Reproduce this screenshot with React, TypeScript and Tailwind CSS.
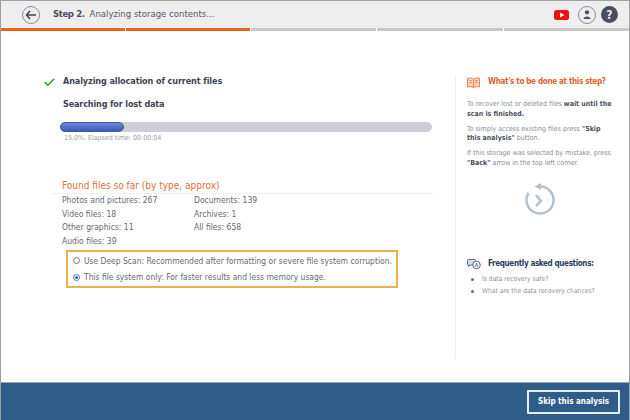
import { Check } from "lucide-react";

const filesLeft = ["Photos and pictures: 267", "Video files: 18", "Other graphics: 11", "Audio files: 39"];
const filesRight = ["Documents: 139", "Archives: 1", "All files: 658"];

const App = () => {
  return (
    <div className="w-[630px] h-[420px] flex flex-col overflow-hidden bg-white border-l border-r border-t border-[#a0a0a0] font-['DejaVu_Sans',sans-serif] [font-stretch:condensed]">
      <div className="h-[27px] shrink-0 bg-[#eeeeee] flex items-center pl-[21px] pr-[11px]">
        <div className="w-[18px] h-[18px] rounded-full border border-[#8a8d96] flex items-center justify-center">
          <svg width="12" height="10" viewBox="0 0 12 10" fill="none" stroke="#3f4454" strokeWidth="1.5">
            <path d="M5 1 L1.5 5 L5 9 M1.5 5 H11" />
          </svg>
        </div>
        <div className="ml-[13px] text-[9.5px] text-[#555a68] whitespace-nowrap">
          <span className="font-bold text-[#4a4f5e] tracking-[-0.4px]">Step 2.</span>
          <span className="ml-[5px]">Analyzing storage contents...</span>
        </div>
        <div className="ml-auto flex items-center">
          <svg width="15" height="10" viewBox="0 0 15 10" className="shrink-0">
            <rect width="15" height="10" rx="2.5" fill="#f40f0f" />
            <path d="M6 2.5 L10.5 5 L6 7.5 Z" fill="#fff" />
          </svg>
          <div className="ml-[9px] w-[18px] h-[18px] rounded-full border border-[#8a8d96] flex items-center justify-center">
            <svg width="8" height="9" viewBox="0 0 8 9" fill="#4a4e62">
              <circle cx="4" cy="2.3" r="2.1" />
              <path d="M0.5 9 C0.5 5.5 7.5 5.5 7.5 9 Z" />
            </svg>
          </div>
          <div className="ml-[5px] w-[17px] h-[17px] rounded-full bg-[#4a4e62] flex items-center justify-center text-[#eeeeee] text-[12px] font-bold">
            ?
          </div>
        </div>
      </div>
      <div className="h-[3px] shrink-0 flex gap-[1px]">
        <div className="w-[124px] bg-[#e8641b]" />
        <div className="w-[124px] bg-[#e8641b]" />
        <div className="flex-1 bg-[#c9c9c6]" />
        <div className="flex-1 bg-[#c9c9c6]" />
        <div className="flex-1 bg-[#c9c9c6]" />
      </div>

      <div className="flex-1 flex min-h-0">
        <div className="w-[454px] shrink-0 flex flex-col pt-[43px] pl-[42px]">
          <div className="flex items-center h-[16px] whitespace-nowrap">
            <Check size={13} strokeWidth={3} className="text-[#25a925] shrink-0" />
            <span className="ml-[7px] text-[9px] tracking-[-0.1px] font-bold text-[#3f4454]">Analyzing allocation of current files</span>
          </div>
          <div className="ml-[20px] mt-[8px] h-[16px] text-[9px] tracking-[-0.15px] font-bold text-[#3f4454]">Searching for lost data</div>
          <div className="ml-[17px] mt-[8px] w-[372px] h-[10px] rounded-full bg-[#cdcfd6]">
            <div className="w-[64px] h-full rounded-full border border-[#4058a8] bg-gradient-to-b from-[#6c86d8] to-[#3f5ab4]" />
          </div>
          <div className="ml-[21px] mt-[1px] text-[7px] text-[#9a9ea8]">15.0%. Elapsed time: 00:00:04</div>

          <div className="ml-[19px] mt-[36.5px] text-[10px] leading-[12px] text-[#e2703a] whitespace-nowrap">Found files so far (by type, approx)</div>
          <div className="ml-[9px] mt-[1px] w-[381px] border-t border-[#f0f0f0]" />
          <div className="ml-[19px] flex text-[8.5px] text-[#666a74] leading-[13.7px]">
            <div className="w-[132px] flex flex-col">
              {filesLeft.map((f) => (
                <div key={f}>{f}</div>
              ))}
            </div>
            <div className="flex flex-col">
              {filesRight.map((f) => (
                <div key={f}>{f}</div>
              ))}
            </div>
          </div>
          <div className="ml-[23px] mt-[1.5px] w-[332px] h-[38px] border-2 border-[#eeb04d] flex flex-col justify-center gap-[4px] pl-[5px] text-[8.45px] text-[#666a74] whitespace-nowrap">
            <div className="flex items-center gap-[4px]">
              <span className="w-[7px] h-[7px] rounded-full border border-[#777] shrink-0" />
              Use Deep Scan: Recommended after formatting or severe file system corruption.
            </div>
            <div className="flex items-center gap-[4px]">
              <span className="w-[7px] h-[7px] rounded-full border border-[#4a78c8] flex items-center justify-center shrink-0">
                <span className="w-[3px] h-[3px] rounded-full bg-[#2f5fc0]" />
              </span>
              This file system only: For faster results and less memory usage.
            </div>
          </div>
        </div>

        <div className="flex flex-col w-[174px] mt-[44px] mb-[23px] border-l border-[#f0f0f0] pl-[11px] pr-[16px]">
          <div className="flex items-center h-[14px] whitespace-nowrap">
            <svg width="13" height="11" viewBox="0 0 13 11" fill="#f8d3bd" stroke="#e8854f" strokeWidth="1" className="shrink-0">
              <path d="M6.5 2 C5 0.8 2.5 0.8 0.5 1.2 V10 C2.5 9.6 5 9.6 6.5 10.5 C8 9.6 10.5 9.6 12.5 10 V1.2 C10.5 0.8 8 0.8 6.5 2 Z" />
              <path d="M6.5 2 V10.5 M2.5 3.5 H4.8 M2.5 5.5 H4.8 M8.2 3.5 H10.5 M8.2 5.5 H10.5" fill="none" />
            </svg>
            <span className="ml-[8px] text-[8px] tracking-[-0.3px] font-bold text-[#e0622c]">What's to be done at this step?</span>
          </div>
          <div className="mt-[11px] text-[7px] leading-[9.5px] text-[#8a8f9b]">
            To recover lost or deleted files <b className="text-[#4a4f5e]">wait until the scan is finished.</b>
          </div>
          <div className="mt-[5.5px] text-[7px] leading-[9.5px] text-[#8a8f9b]">
            To simply access existing files press <b className="text-[#4a4f5e]">"Skip this analysis"</b> button.
          </div>
          <div className="mt-[5.5px] text-[7px] leading-[9.5px] text-[#8a8f9b]">
            If this storage was selected by mistake, press <b className="text-[#4a4f5e]">"Back"</b> arrow in the top left corner.
          </div>
          <div className="mt-[15px] self-center">
            <svg width="32" height="34" viewBox="0 0 32 34" fill="none" stroke="#b4c1cc" strokeWidth="2.5">
              <path d="M16 3.5 A13.5 13.5 0 1 1 4.5 10" />
              <path d="M10.5 3.5 L17 0 V7 Z" fill="#b4c1cc" stroke="none" />
              <path d="M12 12 L17 18 L12 23" />
            </svg>
          </div>
          <div className="mt-[40px] flex items-center h-[14px] whitespace-nowrap">
            <svg width="14" height="11" viewBox="0 0 14 11" fill="none" stroke="#5a6a86" strokeWidth="1" className="shrink-0">
              <path d="M1.5 0.5 H7.5 Q8.5 0.5 8.5 1.5 V5 Q8.5 6 7.5 6 H3 L1.5 7.5 V6 Q0.5 6 0.5 5 V1.5 Q0.5 0.5 1.5 0.5 Z" fill="#d6deea" />
              <circle cx="9.5" cy="6" r="3.8" fill="#fff" />
              <path d="M8 8 L9.5 4 L11 8 M8.6 6.8 H10.4" strokeWidth="0.7" />
            </svg>
            <span className="ml-[7px] text-[8px] tracking-[-0.35px] font-bold text-[#2c3e5c]">Frequently asked questions:</span>
          </div>
          <ul className="mt-[3px] flex flex-col gap-[2px] text-[6.7px] leading-[10px] text-[#8a8f9b] whitespace-nowrap">
            {["Is data recovery safe?", "What are the data recovery chances?"].map((q) => (
              <li key={q} className="flex items-center">
                <span className="ml-[4px] w-[3px] h-[3px] rounded-full bg-[#5a6f9a] shrink-0" />
                <span className="ml-[8px]">{q}</span>
              </li>
            ))}
          </ul>
        </div>
      </div>

      <div className="h-[38px] shrink-0 bg-[#2f5d8a] border-t border-[#9aa5b0] flex items-center justify-end pr-[10px] -mx-[1px]">
        <button className="w-[93px] h-[24px] border-2 border-[#e6edf3] rounded-[1px] text-white text-[8px] font-bold whitespace-nowrap">
          Skip this analysis
        </button>
      </div>
    </div>
  );
};

export default App;
